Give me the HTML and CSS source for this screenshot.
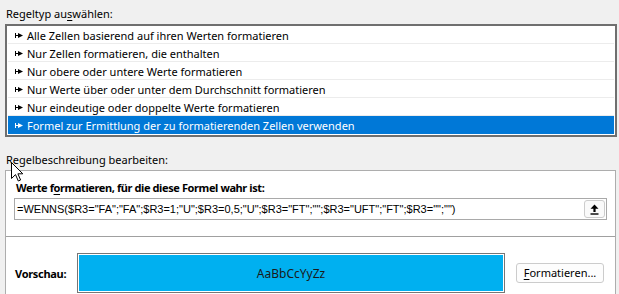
FILE: index.html
```html
<!DOCTYPE html>
<html lang="de">
<head>
<meta charset="utf-8">
<title>Neue Formatierungsregel</title>
<link rel="stylesheet" href="styles.css">
</head>
<body>
<div class="dialog">
    <div class="caption">Regeltyp au<u>s</u>wählen:</div>
    <ul class="ruleList">
        <li><svg class="mark" width="8" height="5" viewBox="0 0 8 5"><rect x="0" y="0" width="1" height="5"/><rect x="1" y="2" width="3" height="1"/><polygon points="3,0 8,2.5 3,5"/></svg>Alle Zellen basierend auf ihren Werten formatieren</li>
        <li><svg class="mark" width="8" height="5" viewBox="0 0 8 5"><rect x="0" y="0" width="1" height="5"/><rect x="1" y="2" width="3" height="1"/><polygon points="3,0 8,2.5 3,5"/></svg>Nur Zellen formatieren, die enthalten</li>
        <li><svg class="mark" width="8" height="5" viewBox="0 0 8 5"><rect x="0" y="0" width="1" height="5"/><rect x="1" y="2" width="3" height="1"/><polygon points="3,0 8,2.5 3,5"/></svg>Nur obere oder untere Werte formatieren</li>
        <li><svg class="mark" width="8" height="5" viewBox="0 0 8 5"><rect x="0" y="0" width="1" height="5"/><rect x="1" y="2" width="3" height="1"/><polygon points="3,0 8,2.5 3,5"/></svg>Nur Werte über oder unter dem Durchschnitt formatieren</li>
        <li><svg class="mark" width="8" height="5" viewBox="0 0 8 5"><rect x="0" y="0" width="1" height="5"/><rect x="1" y="2" width="3" height="1"/><polygon points="3,0 8,2.5 3,5"/></svg>Nur eindeutige oder doppelte Werte formatieren</li>
        <li class="selected"><svg class="mark" width="8" height="5" viewBox="0 0 8 5"><rect x="0" y="0" width="1" height="5"/><rect x="1" y="2" width="3" height="1"/><polygon points="3,0 8,2.5 3,5"/></svg>Formel zur Ermittlung der zu formatierenden Zellen verwenden</li>
    </ul>

    <div class="caption second">Regelbeschreibung bearbeiten:</div>
    <div class="ruleBox">
        <div class="boxTitle">Werte f<u>o</u>rmatieren, für die diese Formel wahr ist:</div>
        <div class="formula">
            <span class="formulaText">=WENNS($R3="FA";"FA";$R3=1;"U";$R3=0,5;"U";$R3="FT";"";$R3="UFT";"FT";$R3="";"")</span>
            <span class="pickBtn"><svg width="9" height="11" viewBox="0 0 9 11"><path d="M4.5 0.5 L8.5 4.8 H5.6 V8 H3.4 V4.8 H0.5 Z"/><rect x="0.5" y="9.3" width="8" height="1.4"/></svg></span>
        </div>
        <div class="divider"></div>
        <div class="previewRow">
            <div class="previewLabel">Vorschau:</div>
            <div class="previewBox"><div class="previewFill">AaBbCcYyZz</div></div>
            <div class="formatBtn"><u>F</u>ormatieren...</div>
        </div>
    </div>

    <svg class="cursor" width="13" height="20" viewBox="0 0 13 20"><path d="M0.5 0.5 L0.5 16.5 L4.5 12.6 L7.3 19 L9.6 18 L6.9 11.8 L11.8 11.8 Z" fill="#fff" stroke="#000" stroke-width="1"/></svg>
</div>
</body>
</html>
```

FILE: styles.css
```css
* { margin: 0; padding: 0; box-sizing: border-box; }
body { background: #f0f0f0; font-family: "Noto Sans", "Liberation Sans", sans-serif; font-size: 11px; color: #000; overflow: hidden; }
ul { list-style: none; }
u { text-decoration: underline; text-underline-offset: 2px; }

.dialog { position: relative; width: 619px; height: 294px; padding-left: 5px; }
.caption { height: 24px; padding: 6px 0 0 1px; line-height: 16px; }
.caption.second { height: 32px; padding-top: 14px; margin-top: 1px; }

.ruleList { width: 612px; border: 2px solid #6f6f6f; background: #fff; padding: 0 1px 1px; }
.ruleList li { display: flex; align-items: center; height: 18px; border-bottom: 1px solid #ececec; padding: 1px 0 0 7px; line-height: 17px; }
.ruleList li:last-child { border-bottom: 0; }
.ruleList .mark { margin-right: 4px; fill: #000; flex: none; }
.ruleList li.selected { background: #0078d7; color: #fff; }
.ruleList li.selected .mark { fill: #fff; }

.ruleBox { width: 611px; height: 125px; background: #fff; border: 1px solid #adadad; border-bottom: 0; }
.boxTitle { font-weight: bold; letter-spacing: -0.4px; line-height: 16px; padding: 9px 0 0 10px; }
.formula { display: flex; align-items: center; justify-content: space-between; height: 22px; margin: 2px 8px 0 8px; border: 1px solid #a9a9a9; padding: 0 1px 0 2px; }
.formulaText { font-family: "Liberation Sans", Arial, sans-serif; font-size: 11px; white-space: nowrap; }
.pickBtn { display: flex; align-items: center; justify-content: center; width: 21px; height: 18px; border: 1px solid #cdcdcd; border-radius: 3px; background: #fafafa; }
.divider { height: 1px; background: #a0a0a0; margin-top: 16px; }
.previewRow { display: flex; align-items: center; padding: 16px 0 0 9px; }
.previewLabel { width: 62px; font-weight: bold; letter-spacing: -0.3px; }
.previewBox { width: 428px; height: 40px; border: 1px solid #767676; padding: 1px; background: #fff; }
.previewFill { height: 100%; background: #00b0f0; display: flex; align-items: center; justify-content: center; font-size: 12px; color: #1a1a1a; }
.formatBtn { width: 88px; height: 20px; margin-left: 11px; border: 1px solid #cccccc; border-radius: 3px; background: #fdfdfd; text-align: center; line-height: 18px; }

.cursor { position: absolute; left: 11px; top: 162px; }
```
